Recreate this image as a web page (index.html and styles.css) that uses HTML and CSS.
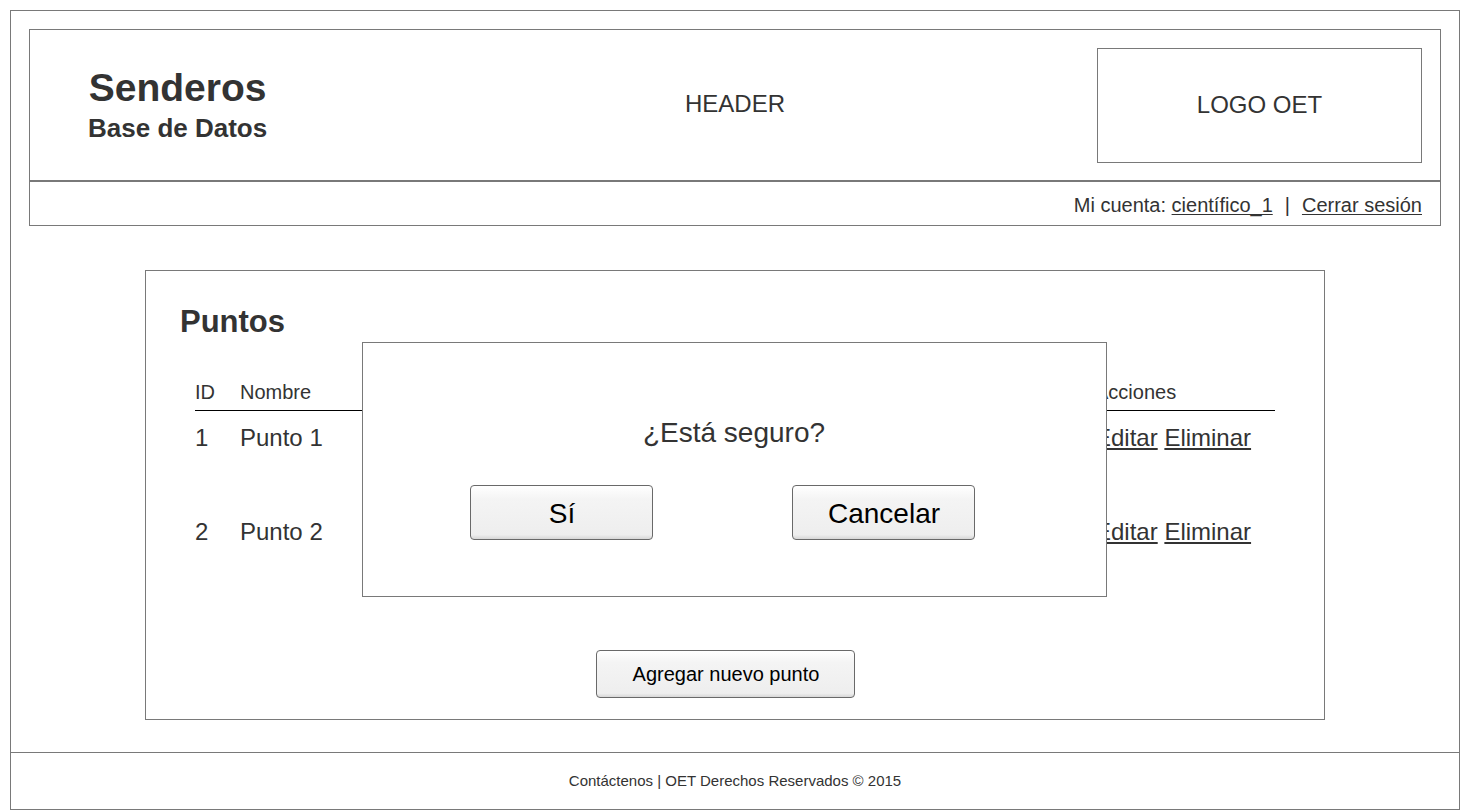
FILE: index.html
```html
<!DOCTYPE html>
<html lang="es">
<head>
<meta charset="utf-8">
<title>Senderos - Puntos</title>
<link rel="stylesheet" href="styles.css">
</head>
<body>
<div class="page">
  <header class="header">
    <div class="banner">
      <div class="brand">
        <h1 class="brand-name">Senderos</h1>
        <p class="brand-sub">Base de Datos</p>
      </div>
      <p class="banner-label">HEADER</p>
      <div class="logo">LOGO OET</div>
    </div>
    <nav class="account">
      <span>Mi cuenta: <a href="#cuenta">científico_1</a></span>
      <span>|</span>
      <a href="#salir">Cerrar sesión</a>
    </nav>
  </header>
  <main class="panel">
    <h2 class="panel-title">Puntos</h2>
    <table class="points">
      <thead>
        <tr><th class="col-id">ID</th><th>Nombre</th><th class="col-actions">Acciones</th></tr>
      </thead>
      <tbody>
        <tr><td>1</td><td>Punto 1</td><td><a href="#editar-1">Editar</a> <a href="#eliminar-1">Eliminar</a></td></tr>
        <tr><td>2</td><td>Punto 2</td><td><a href="#editar-2">Editar</a> <a href="#eliminar-2">Eliminar</a></td></tr>
      </tbody>
    </table>
    <button class="button button-add" type="button">Agregar nuevo punto</button>
    <div class="dialog" role="dialog" aria-labelledby="question">
      <p class="question" id="question">¿Está seguro?</p>
      <div class="dialog-actions">
        <button class="button button-large" type="button">Sí</button>
        <button class="button button-large" type="button">Cancelar</button>
      </div>
    </div>
  </main>
  <footer class="footer">Contáctenos | OET Derechos Reservados © 2015</footer>
</div>
</body>
</html>
```
FILE: styles.css
```css
* {
  box-sizing: border-box;
}

body {
  margin: 10px 0 0 10px;
  background: #fff;
  color: #333;
  font-family: "Liberation Sans", Arial, sans-serif;
  font-size: 20px;
  line-height: 24px;
}

h1, h2, p {
  margin: 0;
}

a {
  color: inherit;
  text-decoration-thickness: 1px;
  text-underline-offset: 2px;
  text-decoration-skip-ink: none;
}

.page {
  display: flex;
  flex-direction: column;
  min-height: calc(100vh - 10px);
  border: 1px solid #797979;
}

.header {
  margin: 18px 18px 44px;
  border: 1px solid #797979;
}

.banner {
  display: grid;
  grid-template-columns: 1fr auto 1fr;
  align-items: center;
  padding: 18px 18px 17px;
  border-bottom: 2px solid #797979;
  font-size: 24px;
}

.brand {
  justify-self: start;
  padding-left: 40px;
  text-align: center;
}

.brand-name {
  font-size: 39px;
  line-height: 44px;
}

.brand-sub {
  font-size: 26px;
  font-weight: bold;
  line-height: 36px;
}

.banner-label {
  padding-bottom: 4px;
}

.logo {
  display: flex;
  align-items: center;
  justify-content: center;
  justify-self: end;
  width: 325px;
  height: 115px;
  padding-bottom: 2px;
  border: 1px solid #797979;
}

.account {
  display: flex;
  justify-content: flex-end;
  gap: 12px;
  padding: 11px 18px 8px;
}

.panel {
  position: relative;
  display: flex;
  flex-direction: column;
  align-self: center;
  width: 1180px;
  max-width: 100%;
  margin-bottom: 32px;
  padding: 31px 49px 21px;
  border: 1px solid #797979;
}

.panel-title {
  margin-left: -15px;
  font-size: 31px;
  line-height: 40px;
}

.points {
  width: 100%;
  margin-top: 33px;
  border-collapse: collapse;
  table-layout: fixed;
}

.points th {
  padding: 5px 0 6px;
  border-bottom: 1px solid #000;
  font-weight: normal;
  text-align: left;
}

.points td {
  height: 94px;
  padding: 13px 0 0;
  font-size: 24px;
  line-height: 28px;
  vertical-align: top;
}

.points td a {
  text-decoration-thickness: 2px;
}

.col-id {
  width: 45px;
}

.col-actions {
  width: 180px;
}

.button {
  padding: 2px 0 0 2px;
  border: 1px solid #696969;
  border-radius: 4px;
  background: linear-gradient(#fff, #f4f4f4 25%, #eee 92%, #d7d7d7);
  color: #000;
  font-family: inherit;
}

.button-add {
  align-self: center;
  width: 259px;
  height: 48px;
  margin: 51px 20px 0 0;
  font-size: 20px;
}

.button-large {
  width: 183px;
  height: 55px;
  font-size: 28px;
}

.dialog {
  position: absolute;
  top: 71px;
  right: 2px;
  left: 0;
  width: 745px;
  max-width: 100%;
  margin: 0 auto;
  padding: 74px 24px 56px 0;
  border: 1px solid #797979;
  background: #fff;
}

.question {
  padding-left: 24px;
  font-size: 28px;
  line-height: 32px;
  text-align: center;
}

.dialog-actions {
  display: flex;
  justify-content: center;
  gap: 139px;
  margin-top: 36px;
}

.footer {
  flex: 1;
  padding: 16px 16px 15px;
  border-top: 1px solid #797979;
  font-size: 15px;
  text-align: center;
}
```
